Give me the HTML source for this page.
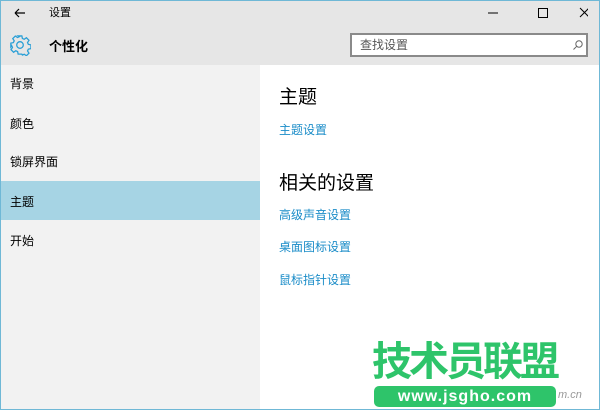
<!DOCTYPE html>
<html><head><meta charset="utf-8"><style>
*{margin:0;padding:0;box-sizing:border-box}
body{width:600px;height:410px;position:relative;overflow:hidden;font-family:"Liberation Sans","Noto Sans CJK SC",sans-serif;background:#fff}
.hdr{position:absolute;left:0;top:0;width:600px;height:65px;background:#e6e6e6}
.side{position:absolute;left:0;top:65px;width:260px;height:345px;background:#f2f2f2}
.frame{position:absolute;left:0;top:0;width:600px;height:410px;border:1px solid #6fb8d6;pointer-events:none}
.t{position:absolute;white-space:nowrap}
.nav{position:absolute;left:10px;font-size:12px;color:#000}
.sel{position:absolute;left:0;top:181px;width:260px;height:39px;background:#a6d4e4}
.link{position:absolute;left:279px;font-size:12px;color:#1a8cc8}
.search{position:absolute;left:350px;top:33px;width:238px;height:24px;background:#fff;border:2px solid #8a8a8a}
</style></head><body>
<div class="hdr"></div>
<div class="side"></div>
<div class="sel"></div>
<svg class="t" style="left:13px;top:6px" width="14" height="14" viewBox="0 0 14 14"><path d="M2 7H12M2 7L6 3M2 7L6 11" stroke="#000" stroke-width="1.2" fill="none"/></svg>
<div class="t" style="left:49px;top:4px;font-size:11px;color:#000">设置</div>
<svg class="t" style="left:488px;top:6px" width="100" height="14"><path d="M0 7H10" stroke="#000"/><rect x="50.5" y="2.5" width="9" height="9" fill="none" stroke="#000"/><path d="M92 2L101 11M101 2L92 11" stroke="#000"/></svg>
<svg class="t" style="left:9px;top:34px" width="22" height="22" viewBox="0 0 24 24"><path d="M10 2h4l.6 2.8 2 .9 2.4-1.6 2.8 2.8-1.6 2.4.9 2 2.8.6v4l-2.8.6-.9 2 1.6 2.4-2.8 2.8-2.4-1.6-2 .9L14 22h-4l-.6-2.8-2-.9-2.4 1.6-2.8-2.8 1.6-2.4-.9-2L2 14v-4l2.8-.6.9-2-1.6-2.4 2.8-2.8 2.4 1.6 2-.9z" fill="none" stroke="#2a9fd6" stroke-width="1.4"/><circle cx="12" cy="12" r="3.6" fill="none" stroke="#2a9fd6" stroke-width="1.4"/></svg>
<div class="t" style="left:49px;top:36px;font-size:13px;font-weight:bold;color:#000">个性化</div>
<div class="search"></div>
<div class="t" style="left:360px;top:36px;font-size:12px;color:#555">查找设置</div>
<svg class="t" style="left:572px;top:39px" width="12" height="12"><circle cx="7" cy="5" r="3.2" fill="none" stroke="#666"/><path d="M4.7 7.3L1.5 10.5" stroke="#666"/></svg>
<div class="nav" style="top:75px">背景</div>
<div class="nav" style="top:115px">颜色</div>
<div class="nav" style="top:153px">锁屏界面</div>
<div class="nav" style="top:193px">主题</div>
<div class="nav" style="top:232px">开始</div>
<div class="t" style="left:279px;top:82px;font-size:19px;color:#000">主题</div>
<div class="link" style="top:121px">主题设置</div>
<div class="t" style="left:279px;top:168px;font-size:19px;color:#000">相关的设置</div>
<div class="link" style="top:206px">高级声音设置</div>
<div class="link" style="top:238px">桌面图标设置</div>
<div class="link" style="top:271px">鼠标指针设置</div>
<div class="t" style="left:372px;top:338px;font-size:40px;line-height:48px;font-weight:bold;color:#2ec46a;letter-spacing:-3px">技术员联盟</div>
<div class="t" style="left:374px;top:386px;width:182px;height:21px;background:#2ec46a;border-radius:5px;color:#fff;font-size:16px;font-weight:bold;text-align:center;line-height:21px;letter-spacing:1px">www.jsgho.com</div>
<div class="t" style="left:558px;top:389px;font-size:11px;font-style:italic;color:#999">m.cn</div>
<div class="frame"></div>
</body></html>
